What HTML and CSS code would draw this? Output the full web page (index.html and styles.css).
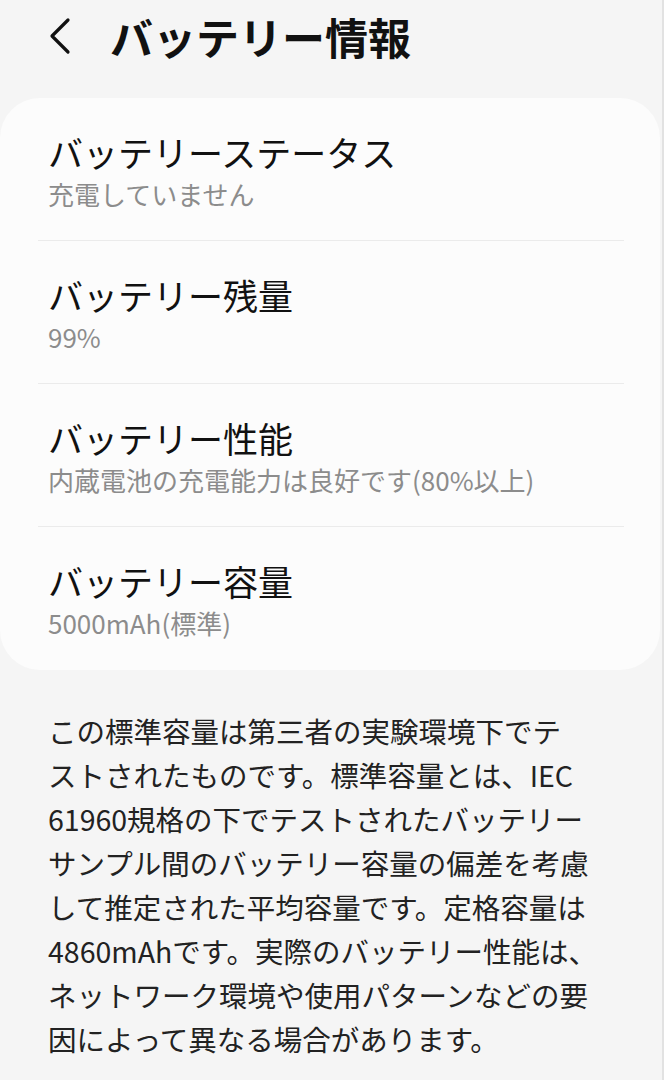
FILE: index.html
```html
<!DOCTYPE html>
<html lang="ja">
<head>
<meta charset="utf-8">
<link rel="stylesheet" href="styles.css">
</head>
<body>
<div class="screen">
  <header class="header">
    <svg class="back" width="28" height="40" viewBox="0 0 28 40"><path d="M22 4 L6 20 L22 36" fill="none" stroke="#111" stroke-width="3.2" stroke-linecap="round" stroke-linejoin="round"/></svg>
    <h1 class="title">バッテリー情報</h1>
  </header>
  <section class="card">
    <div class="row">
      <div class="row-title">バッテリーステータス</div>
      <div class="row-sub">充電していません</div>
    </div>
    <div class="row">
      <div class="row-title">バッテリー残量</div>
      <div class="row-sub">99%</div>
    </div>
    <div class="row">
      <div class="row-title">バッテリー性能</div>
      <div class="row-sub">内蔵電池の充電能力は良好です(80%以上)</div>
    </div>
    <div class="row last">
      <div class="row-title">バッテリー容量</div>
      <div class="row-sub">5000mAh(標準)</div>
    </div>
  </section>
  <p class="note">この標準容量は第三者の実験環境下でテ<br>ストされたものです。標準容量とは、IEC<br>61960規格の下でテストされたバッテリー<br>サンプル間のバッテリー容量の偏差を考慮<br>して推定された平均容量です。定格容量は<br>4860mAhです。実際のバッテリー性能は、<br>ネットワーク環境や使用パターンなどの要<br>因によって異なる場合があります。</p>
</div>
</body>
</html>
```
FILE: styles.css
```css
html, body {
  margin: 0;
  padding: 0;
  background: #f5f5f5;
}
body {
  font-family: "Noto Sans CJK JP", "Noto Sans", sans-serif;
  color: #111;
}
.screen {
  width: 664px;
  height: 1080px;
  overflow: hidden;
  box-sizing: border-box;
  border-right: 2px solid #e2e2e2;
}
.header {
  height: 98px;
  display: flex;
  align-items: center;
  padding-left: 46px;
  box-sizing: border-box;
  padding-bottom: 26px;
}
.back {
  display: block;
}
.title {
  margin: 0 0 0 36px;
  font-size: 43px;
  font-weight: 700;
  line-height: 1;
  letter-spacing: 0;
}
.card {
  width: 660px;
  background: #fcfcfc;
  border-radius: 40px;
  padding: 0 36px 0 38px;
  box-sizing: border-box;
}
.row {
  height: 143px;
  box-sizing: border-box;
  padding: 32px 0 0 10px;
  border-bottom: 1.5px solid #ebebeb;
}
.row.last {
  border-bottom: none;
}
.row-title {
  font-size: 35px;
  line-height: 44px;
  color: #111;
  white-space: nowrap;
}
.row-sub {
  margin-top: 2px;
  font-size: 26px;
  line-height: 36px;
  color: #8c8c8c;
  white-space: nowrap;
}
.note {
  margin: 39px 0 0 0;
  padding: 0 48px;
  font-size: 28.5px;
  line-height: 44px;
  color: #222;
  white-space: nowrap;
}
```
